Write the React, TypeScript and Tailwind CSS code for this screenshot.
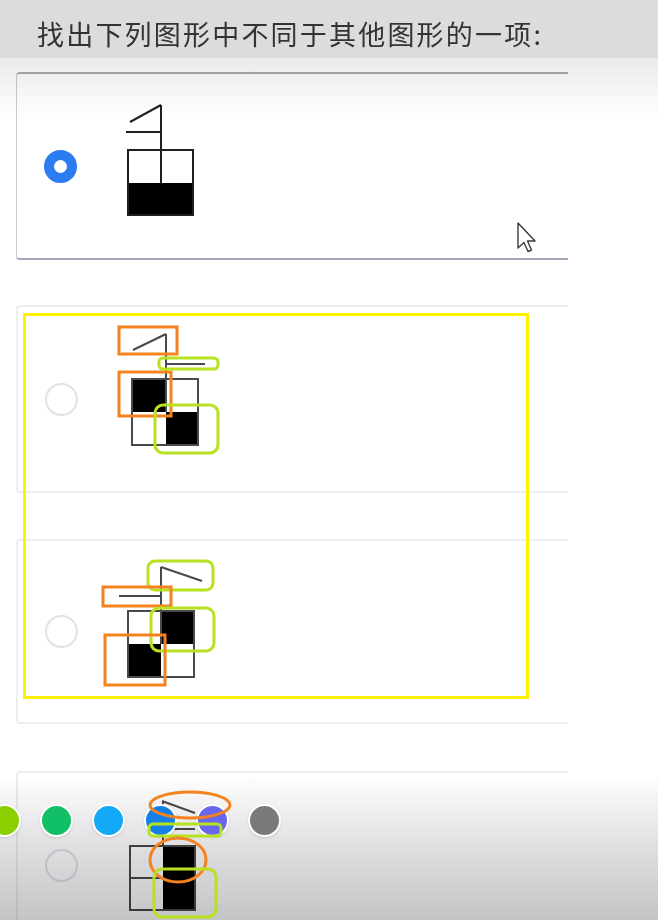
import React from "react";

type Variant = 1 | 2 | 3 | 4;

// figure coordinates are relative to the card's top edge, x starts at page x=100
function Figure({ v }: { v: Variant }) {
  const ink = v === 1 ? "#1f1f1f" : "#4a4a4a";
  return (
    <svg width="130" height="186" viewBox="0 0 130 186" className="shrink-0 ml-[24px]">
      {v === 1 && (
        <g stroke={ink} strokeWidth="2" fill="none">
          <rect x="27" y="110" width="65" height="32" fill="#000" stroke="none" />
          <rect x="27" y="77" width="65" height="65" />
          <line x1="60" y1="32" x2="60" y2="110" />
          <line x1="29" y1="49" x2="60" y2="32" />
          <line x1="25" y1="59" x2="60" y2="59" />
        </g>
      )}
      {v === 2 && (
        <g stroke={ink} strokeWidth="2" fill="none">
          <rect x="30" y="73" width="34" height="33" fill="#000" stroke="none" />
          <rect x="64" y="106" width="32" height="33" fill="#000" stroke="none" />
          <rect x="30" y="73" width="66" height="66" />
          <line x1="64" y1="28" x2="64" y2="106" />
          <line x1="31" y1="44" x2="64" y2="28" />
          <line x1="64" y1="58" x2="103" y2="58" />
        </g>
      )}
      {v === 3 && (
        <g stroke={ink} strokeWidth="2" fill="none">
          <rect x="59" y="72" width="33" height="33" fill="#000" stroke="none" />
          <rect x="26" y="105" width="33" height="33" fill="#000" stroke="none" />
          <rect x="26" y="72" width="66" height="66" />
          <line x1="59" y1="28" x2="59" y2="105" />
          <line x1="59" y1="28" x2="100" y2="42" />
          <line x1="17" y1="57" x2="59" y2="57" />
        </g>
      )}
      {v === 4 && (
        <g stroke={ink} strokeWidth="2" fill="none">
          <rect x="61" y="74" width="32" height="64" fill="#000" stroke="none" />
          <rect x="28" y="74" width="65" height="64" />
          <line x1="28" y1="106" x2="61" y2="106" />
          <line x1="61" y1="29" x2="61" y2="74" />
          <line x1="60" y1="29" x2="93" y2="41" />
          <line x1="70" y1="57" x2="93" y2="57" />
        </g>
      )}
    </svg>
  );
}

function Radio({ checked }: { checked?: boolean }) {
  return checked ? (
    <div className="w-[33px] h-[33px] shrink-0 ml-[27px] rounded-full border-[10px] border-[#2a7cf0] bg-white" />
  ) : (
    <div className="w-[33px] h-[33px] shrink-0 ml-[27px] rounded-full border-2 border-[#e2e2e4] bg-white" />
  );
}

const options: { v: Variant; checked?: boolean; h: string; mt: string; border: string }[] = [
  { v: 1, checked: true, h: "h-[188px]", mt: "mt-[14px]", border: "border-t-2 border-b-2 border-l border-t-[#acacac] border-b-[#a6a6ba] border-l-[#c9c9d6]" },
  { v: 2, h: "h-[188px]", mt: "mt-[45px]", border: "border-t-2 border-b-2 border-l-2 border-[#eeeeef]" },
  { v: 3, h: "h-[185px]", mt: "mt-[46px]", border: "border-t-2 border-b-2 border-l-2 border-[#eeeeef]" },
  { v: 4, h: "h-[188px]", mt: "mt-[47px]", border: "border-t-2 border-b-2 border-l-2 border-[#eeeeef]" },
];

const penColors = ["#8ccf00", "#10bf66", "#13a9f7", "#1480e6", "#6866ec", "#7b797c"];

export default function App() {
  return (
    <div className="relative w-[658px] h-[920px] overflow-hidden bg-white font-['Noto_Sans_CJK_SC',sans-serif]">
      <div className="h-[58px] bg-[#dcdcdc] pl-[37px] pt-[10px] flex items-center text-[27px] tracking-[2.2px] text-[#333333]">
        找出下列图形中不同于其他图形的一项:
      </div>

      <div className="ml-[16px] w-[552px]">
        {options.map((o) => (
          <div key={o.v} className={`${o.h} ${o.mt} ${o.border} box-border rounded-l-[4px] bg-white flex items-center`}>
            <Radio checked={o.checked} />
            <Figure v={o.v} />
          </div>
        ))}
      </div>

      {/* screen fades from the recording */}
      <div className="pointer-events-none absolute left-0 right-0 top-[58px] h-[60px] mix-blend-multiply bg-gradient-to-b from-[#eaeaea] to-white" />
      <div className="pointer-events-none absolute left-0 right-0 top-[775px] bottom-0 mix-blend-multiply bg-gradient-to-b from-white via-[#dfdee1] to-[#c4c3c6]" />

      {/* pen colour palette */}
      <div className="absolute left-[-12px] top-[804px] flex gap-[19px]">
        {penColors.map((c) => (
          <div key={c} className="w-[33px] h-[33px] rounded-full border-2 border-white shadow-sm" style={{ backgroundColor: c }} />
        ))}
      </div>

      {/* hand-drawn annotations */}
      <svg className="pointer-events-none absolute inset-0" width="658" height="920" viewBox="0 0 658 920" fill="none">
        <rect x="24.5" y="314.5" width="503" height="383" stroke="#fff200" strokeWidth="3" />

        <rect x="119" y="327" width="58" height="27" stroke="#f5821f" strokeWidth="3" />
        <rect x="119" y="372" width="52" height="44" stroke="#f5821f" strokeWidth="3" />
        <rect x="159" y="358" width="59" height="11" rx="4" stroke="#b6e21f" strokeWidth="3" />
        <rect x="155" y="405" width="63" height="48" rx="8" stroke="#b6e21f" strokeWidth="3" />

        <rect x="148" y="561" width="65" height="29" rx="7" stroke="#b6e21f" strokeWidth="3" />
        <rect x="103" y="587" width="68" height="19" stroke="#f5821f" strokeWidth="3" />
        <rect x="151" y="608" width="63" height="43" rx="8" stroke="#b6e21f" strokeWidth="3" />
        <rect x="105" y="635" width="60" height="50" stroke="#f5821f" strokeWidth="3" />

        <ellipse cx="190" cy="805" rx="40" ry="13" stroke="#f5821f" strokeWidth="3" />
        <rect x="149" y="824" width="72" height="12" rx="4" stroke="#b6e21f" strokeWidth="3" />
        <ellipse cx="178" cy="860" rx="28" ry="22" stroke="#f5821f" strokeWidth="3" />
        <rect x="154" y="869" width="62" height="48" rx="8" stroke="#b6e21f" strokeWidth="3" />
      </svg>

      {/* mouse pointer */}
      <svg className="pointer-events-none absolute left-[517px] top-[222px]" width="20" height="32" viewBox="0 0 20 32">
        <path d="M1 1 L1 26 L7 20.5 L11 29.5 L14.5 28 L10.5 19 L18 19 Z" fill="#fff" stroke="#3a3a3a" strokeWidth="1.4" strokeLinejoin="round" />
      </svg>
    </div>
  );
}
